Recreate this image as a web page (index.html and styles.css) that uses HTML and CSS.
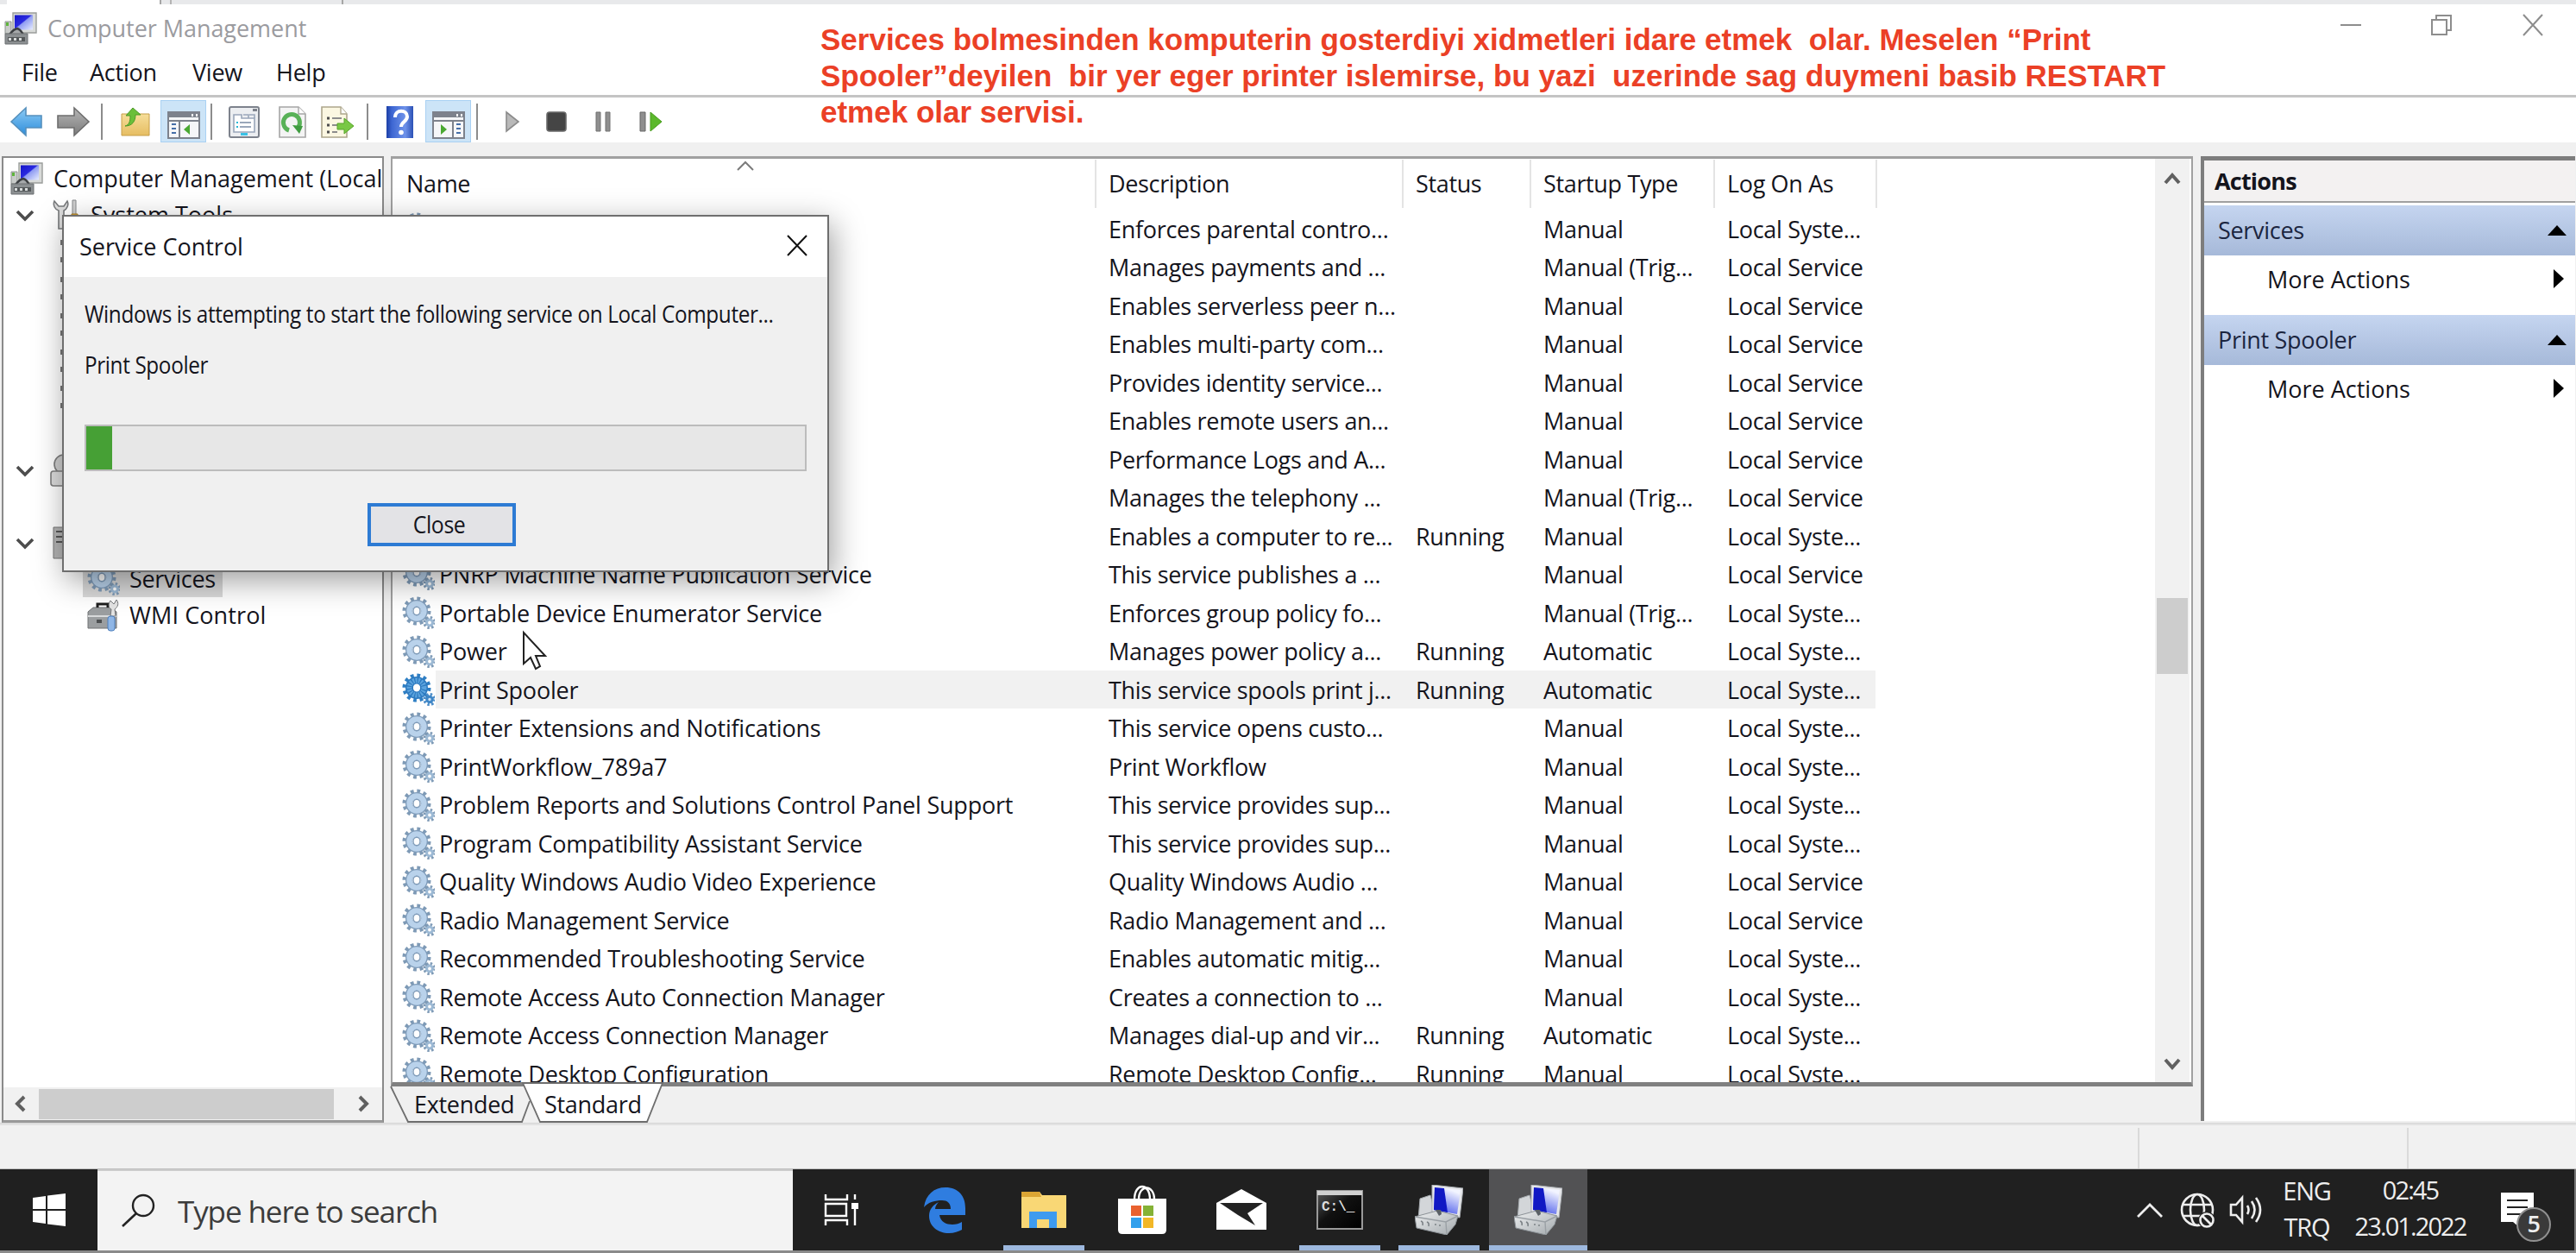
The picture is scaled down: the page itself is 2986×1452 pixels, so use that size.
FILE: index.html
```html
<!DOCTYPE html>
<html lang="en">
<head>
<meta charset="utf-8">
<title>Computer Management</title>
<link rel="stylesheet" href="styles.css">
</head>
<body>
<svg class="defs" width="0" height="0">
  <defs>
    <linearGradient id="gBlue" x1="0" y1="0" x2="1" y2="1"><stop offset="0" stop-color="#1414c8"/><stop offset=".45" stop-color="#2a2ae0"/><stop offset=".5" stop-color="#8f9cf2"/><stop offset="1" stop-color="#e6ecff"/></linearGradient>
    <linearGradient id="gScreen" x1="0" y1="1" x2=".4" y2="0"><stop offset="0" stop-color="#3a4be8"/><stop offset="1" stop-color="#f2f4ff"/></linearGradient>
    <linearGradient id="gArrow" x1="0" y1="0" x2="0" y2="1"><stop offset="0" stop-color="#8ccbf5"/><stop offset="1" stop-color="#2d8ddb"/></linearGradient>
    <linearGradient id="gGray" x1="0" y1="0" x2="0" y2="1"><stop offset="0" stop-color="#b5b5b5"/><stop offset="1" stop-color="#7c7c7c"/></linearGradient>
    <linearGradient id="gFolder" x1="0" y1="0" x2="0" y2="1"><stop offset="0" stop-color="#f8e2a0"/><stop offset="1" stop-color="#e6bd62"/></linearGradient>
    <linearGradient id="gHelp" x1="0" y1="0" x2="1" y2="0"><stop offset="0" stop-color="#1c3fa6"/><stop offset=".2" stop-color="#3d66d2"/><stop offset=".7" stop-color="#6f93ea"/><stop offset="1" stop-color="#2b50b5"/></linearGradient>
    <linearGradient id="gTower" x1="0" y1="0" x2="1" y2="1"><stop offset="0" stop-color="#eef0f1"/><stop offset="1" stop-color="#a3a9ad"/></linearGradient>
    <linearGradient id="gCmd" x1="0" y1="0" x2="1" y2="1"><stop offset="0" stop-color="#5a5a5a"/><stop offset=".45" stop-color="#111"/><stop offset="1" stop-color="#000"/></linearGradient>
  </defs>
  <symbol id="gear" viewBox="0 0 38 38">
    <circle cx="17" cy="17" r="14" fill="none" stroke="#7e9ab6" stroke-width="5" stroke-dasharray="3.66 3.66"/>
    <circle cx="17" cy="17" r="9" fill="none" stroke="#7f9cba" stroke-width="8"/>
    <circle cx="17" cy="17" r="8.500" fill="none" stroke="#b9d2eb" stroke-width="6.400"/>
    <ellipse cx="17" cy="17" rx="4" ry="4.800" fill="#fff" stroke="#7f9cba" stroke-width="1.4"/>
    <circle cx="32" cy="30.500" r="5.600" fill="none" stroke="#7e9ab6" stroke-width="4" stroke-dasharray="2.2 2.2"/>
    <circle cx="32" cy="30.500" r="3.400" fill="#fff" stroke="#9cb9d4" stroke-width="3"/>
  </symbol>
  <symbol id="gear-on" viewBox="0 0 38 38">
    <circle cx="17" cy="17" r="14" fill="none" stroke="#2f7fc4" stroke-width="5" stroke-dasharray="3.66 3.66"/>
    <circle cx="17" cy="17" r="8.500" fill="none" stroke="#2c79bf" stroke-width="9"/>
    <circle cx="17" cy="17" r="8.500" fill="none" stroke="#5ba3de" stroke-width="6" stroke-dasharray="2 1.2"/>
    <ellipse cx="17" cy="17" rx="3.800" ry="4.600" fill="#fff"/>
    <circle cx="32" cy="30.500" r="5.600" fill="none" stroke="#4a8cc8" stroke-width="4" stroke-dasharray="2.2 2.2"/>
    <circle cx="32" cy="30.500" r="3.200" fill="#cfe3f5" stroke="#3f86c6" stroke-width="3"/>
  </symbol>
  <symbol id="mgmt" viewBox="0 0 38 38">
    <path d="M1 11h7v14H1z" fill="#c9ccca" stroke="#8d918f"/>
    <path d="M2 12h3v4H2z" fill="#5fb53c"/>
    <path d="M10 1h27v23H10z" fill="#d8dad8" stroke="#9a9d9b" stroke-width="1.4"/>
    <path d="M12 3.5h21v17H12z" fill="url(#gBlue)"/>
    <path d="M6 26c2-2 4-6 9-7 4 1 5 4 7 7" fill="#a5a8aa" stroke="#3c3f42" stroke-width="2.4"/>
    <path d="M1 25h26v12H1z" fill="#8c9092" stroke="#6c7072"/>
    <path d="M4 29h20v5H4z" fill="#54585a"/>
    <path d="M5 30h3v3H5zM11 30h3v3h-3zM17 30h3v3h-3z" fill="#d9dcdc"/>
  </symbol>
  <symbol id="mmc" viewBox="0 0 56 58">
    <path d="M6 16l12-4 6 22-20 6z" fill="#d3d6d9" stroke="#a4a9ad"/>
    <path d="M20 0l36 4-4 34-32-6z" fill="#e6e7ea" stroke="#a9adb2"/>
    <path d="M23 3l30 3-4 28-27-5z" fill="url(#gScreen)"/>
    <path d="M23 3l11 1 4 28-16-3z" fill="#1018c4"/>
    <path d="M0 37l26-7 24 6-3 10-10 12L2 50z" fill="url(#gTower)" stroke="#8b9196"/>
    <path d="M0 37l36 6 14-7M36 43l1 15" fill="none" stroke="#9aa0a5" stroke-width="1.4"/>
    <path d="M7 42q3 1 2 5M14 43q3 1 2 5M23 46h2M28 47h2" fill="none" stroke="#7c8286" stroke-width="1.6"/>
    <path d="M24 29l4 7 3-2-1-5z" fill="#5a6066"/>
  </symbol>
  <symbol id="chev" viewBox="0 0 22 14"><path d="M2 2l9 9 9-9" fill="none" stroke="#4d4d4d" stroke-width="3.6"/></symbol>
</svg>

<div class="strip"><i class="tab-on"></i><i class="tab-gap"></i><i class="tab-off"></i></div>

<header class="titlebar">
  <svg class="ic38"><use href="#mgmt"/></svg>
  <span class="title">Computer Management</span>
  <div class="winbtns">
    <svg width="24" height="24"><path d="M0 12h24" stroke="#8d8d8d" stroke-width="2"/></svg>
    <svg width="24" height="24"><path d="M1 6h17v17H1zM6 6V1h17v17h-5" fill="none" stroke="#8d8d8d" stroke-width="2"/></svg>
    <svg width="24" height="24"><path d="M1 0l22 24M23 0L1 24" stroke="#8d8d8d" stroke-width="2"/></svg>
  </div>
</header>

<nav class="menubar"><span>File</span><span>Action</span><span>View</span><span>Help</span></nav>

<div class="toolbar">
  <svg width="37" height="34"><path d="M1 17L18 1v9h18v14H18v9z" fill="url(#gArrow)" stroke="#5590bd" stroke-width="1.6"/></svg>
  <svg width="38" height="34"><path d="M37 17L20 1v9H1v14h19v9z" fill="url(#gGray)" stroke="#6d6d6d" stroke-width="1.6"/></svg>
  <i class="sep"></i>
  <svg width="34" height="34"><path d="M1 8h8l3-3h6v3h15v25H1z" fill="url(#gFolder)" stroke="#c79e48"/><path d="M5 22c5-1 6-6 6-12H6l8-9 9 8h-6c0 8-4 13-12 13z" fill="#6abf3a" stroke="#4c9a26"/></svg>
  <span class="hot"><svg width="38" height="32"><path d="M1 1h36v30H1z" fill="#f5f6f8" stroke="#7d828c" stroke-width="2"/><path d="M1 2h36v5H1z" fill="#7d828c"/><path d="M28 3h2v3h-2zM33 3h2v3h-2z" fill="#fff"/><path d="M1 11h36M14 11v20" stroke="#7d828c" stroke-width="2"/><path d="M5 15h5M5 20h5M5 25h5" stroke="#456ea8" stroke-width="2"/><path d="M26 15v12l-7-6z" fill="#4aa832"/></svg></span>
  <i class="sep"></i>
  <svg width="36" height="37"><rect x="1" y="1" width="34" height="35" rx="2" fill="#eceef1" stroke="#7d828c" stroke-width="2"/><path d="M28 3h5v3h-5z" fill="#7d828c"/><path d="M6 10h9v4h15v16H6z" fill="#fff" stroke="#9aa7ba" stroke-width="1.6"/><path d="M17 10h6v4M24 10h6v4" fill="none" stroke="#9aa7ba" stroke-width="1.6"/><path d="M13 19h13M13 24h13" stroke="#9aa7ba" stroke-width="2"/><path d="M9 19h2M9 24h2" stroke="#26b7d6" stroke-width="2"/><path d="M14 31h8v3h-8z" fill="#3ac2e6"/></svg>
  <svg width="32" height="37"><path d="M1 1h22l8 8v27H1z" fill="#f4f4f4" stroke="#a5a5a5" stroke-width="1.6"/><path d="M23 1v8h8" fill="#fff" stroke="#a5a5a5" stroke-width="1.4"/><path d="M12 28a9.500 9.500 0 1 1 11-4" fill="none" stroke="#58b157" stroke-width="5"/><path d="M16 22l12 1-4 9z" fill="#3f9c40"/></svg>
  <svg width="39" height="37"><path d="M1 1h22l7 8v27H1z" fill="#fbf7e2" stroke="#ada68c" stroke-width="1.6"/><path d="M23 1v8h7" fill="#fff" stroke="#ada68c" stroke-width="1.4"/><path d="M7 14h3M7 22h3M7 30h3" stroke="#4d4d4d" stroke-width="3"/><path d="M13 14h11M13 22h6M13 30h6" stroke="#8d8d8d" stroke-width="2"/><path d="M19 20h8v-6l11 9-11 9v-5h-8z" fill="#79c845" stroke="#58a52c"/></svg>
  <i class="sep"></i>
  <svg width="31" height="37"><path d="M0 0h31v37H0z" fill="url(#gHelp)"/><path d="M10 13c0-10 14-9 14-1 0 6-7 6-7 12" fill="none" stroke="#fff" stroke-width="4"/><circle cx="17" cy="30.500" r="2.800" fill="#fff"/></svg>
  <span class="hot"><svg width="38" height="32"><path d="M1 1h36v30H1z" fill="#f5f6f8" stroke="#7d828c" stroke-width="2"/><path d="M1 2h36v5H1z" fill="#7d828c"/><path d="M28 3h2v3h-2zM33 3h2v3h-2z" fill="#fff"/><path d="M1 11h36M24 11v20" stroke="#7d828c" stroke-width="2"/><path d="M28 15h5M28 20h5M28 25h5" stroke="#456ea8" stroke-width="2"/><path d="M10 15v12l7-6z" fill="#4aa832"/></svg></span>
  <i class="sep"></i>
  <svg width="16" height="24"><path d="M1 1l14 11L1 23z" fill="#b9b9b9" stroke="#8b8b8b" stroke-width="1.600"/></svg>
  <svg width="24" height="24"><rect x="1" y="1" width="22" height="22" rx="3" fill="#454545" stroke="#6a6a6a" stroke-width="1.600"/></svg>
  <svg width="18" height="24"><path d="M1 1h5v22H1zM12 1h5v22h-5z" fill="#8f8f8f" stroke="#707070"/></svg>
  <svg width="27" height="24"><path d="M1 1h6v22H1z" fill="#8f8f8f" stroke="#666"/><path d="M13 1l13 11-13 11z" fill="#5cb82c" stroke="#479a1d"/></svg>
</div>

<main class="main">
  <section class="tree">
    <div class="tree-rows">
      <div class="tr root"><svg class="ic38"><use href="#mgmt"/></svg><span>Computer Management (Local</span></div>
      <div class="tr lvl1"><svg class="chev"><use href="#chev"/></svg><svg width="34" height="38"><path d="M3 3c-2 5 1 10 5 11v21h6V14c4-2 6-7 4-11l-4 6H8z" fill="#dcdcdc" stroke="#77797b" stroke-width="1.600"/><path d="M24 2h4v18h-4z" fill="#cfcfcf" stroke="#86888a"/><path d="M23 18h7v18h-7z" fill="#e0ab3a" stroke="#a77a20"/></svg><span>System Tools</span></div>
      <div class="tr frag"><i></i></div><div class="tr frag"><i></i></div><div class="tr frag"><i></i></div>
      <div class="tr frag"><i></i></div><div class="tr frag"><i></i></div><div class="tr"></div>
      <div class="tr lvl1"><svg class="chev"><use href="#chev"/></svg><svg width="34" height="38"><circle cx="14" cy="12" r="11" fill="#cfcfcf" stroke="#7d7d7d" stroke-width="1.600"/><rect x="-1" y="20" width="32" height="17" rx="3" fill="#dcdcdc" stroke="#7d7d7d" stroke-width="1.600"/></svg></div>
      <div class="tr"></div>
      <div class="tr lvl1"><svg class="chev"><use href="#chev"/></svg><svg width="34" height="38"><path d="M2 1h30v36H2z" fill="#b4b4b4" stroke="#777"/><path d="M5 6h24M5 12h24M5 18h24" stroke="#555" stroke-width="2"/></svg></div>
      <div class="tr lvl2"><span class="picked"><svg class="ic38"><use href="#gear"/></svg>Services</span></div>
      <div class="tr lvl2"><span class="leaf"><svg width="38" height="38"><path d="M1 15l6-5h21l6 5v19H1z" fill="#9b9ea0" stroke="#707375"/><path d="M1 20h33" stroke="#d8dadb" stroke-width="2"/><path d="M12 10V6h12v4" fill="none" stroke="#1e1e1e" stroke-width="3"/><path d="M27 2c-3 4-2 9 1 10l-1 8h6l-1-8c4-3 5-7 2-11l-3 5z" fill="#e4e4e4" stroke="#77797b"/><rect x="24" y="20" width="8" height="17" rx="3" fill="#8fb6e6" stroke="#4d7fbd"/><path d="M11 24h6v4h-6z" fill="#4c4f51"/></svg>WMI Control</span></div>
    </div>
    <div class="hscroll">
      <svg width="14" height="20"><path d="M11 2l-8 8 8 8" fill="none" stroke="#606060" stroke-width="4"/></svg>
      <i class="hthumb"></i>
      <svg width="14" height="20"><path d="M3 2l8 8-8 8" fill="none" stroke="#606060" stroke-width="4"/></svg>
    </div>
  </section>

  <section class="center">
    <div class="list">
      <div class="grid">
        <div class="row head"><b></b><span>Name<svg class="sort" width="20" height="12"><path d="M1 11l9-9 9 9" fill="none" stroke="#7b7b7b" stroke-width="2"/></svg></span><span>Description</span><span>Status</span><span>Startup Type</span><span>Log On As</span></div>
        <div class="row"><svg><use href="#gear"/></svg><span></span><span>Enforces parental contro...</span><span></span><span>Manual</span><span>Local Syste...</span></div>
        <div class="row"><b></b><span></span><span>Manages payments and ...</span><span></span><span>Manual (Trig...</span><span>Local Service</span></div>
        <div class="row"><b></b><span></span><span>Enables serverless peer n...</span><span></span><span>Manual</span><span>Local Service</span></div>
        <div class="row"><b></b><span></span><span>Enables multi-party com...</span><span></span><span>Manual</span><span>Local Service</span></div>
        <div class="row"><b></b><span></span><span>Provides identity service...</span><span></span><span>Manual</span><span>Local Service</span></div>
        <div class="row"><b></b><span></span><span>Enables remote users an...</span><span></span><span>Manual</span><span>Local Service</span></div>
        <div class="row"><b></b><span></span><span>Performance Logs and A...</span><span></span><span>Manual</span><span>Local Service</span></div>
        <div class="row"><b></b><span></span><span>Manages the telephony ...</span><span></span><span>Manual (Trig...</span><span>Local Service</span></div>
        <div class="row"><b></b><span></span><span>Enables a computer to re...</span><span>Running</span><span>Manual</span><span>Local Syste...</span></div>
        <div class="row"><svg><use href="#gear"/></svg><span>PNRP Machine Name Publication Service</span><span>This service publishes a ...</span><span></span><span>Manual</span><span>Local Service</span></div>
        <div class="row"><svg><use href="#gear"/></svg><span>Portable Device Enumerator Service</span><span>Enforces group policy fo...</span><span></span><span>Manual (Trig...</span><span>Local Syste...</span></div>
        <div class="row"><svg><use href="#gear"/></svg><span>Power</span><span>Manages power policy a...</span><span>Running</span><span>Automatic</span><span>Local Syste...</span></div>
        <div class="row sel"><svg><use href="#gear-on"/></svg><span>Print Spooler</span><span>This service spools print j...</span><span>Running</span><span>Automatic</span><span>Local Syste...</span></div>
        <div class="row"><svg><use href="#gear"/></svg><span>Printer Extensions and Notifications</span><span>This service opens custo...</span><span></span><span>Manual</span><span>Local Syste...</span></div>
        <div class="row"><svg><use href="#gear"/></svg><span>PrintWorkflow_789a7</span><span>Print Workflow</span><span></span><span>Manual</span><span>Local Syste...</span></div>
        <div class="row"><svg><use href="#gear"/></svg><span>Problem Reports and Solutions Control Panel Support</span><span>This service provides sup...</span><span></span><span>Manual</span><span>Local Syste...</span></div>
        <div class="row"><svg><use href="#gear"/></svg><span>Program Compatibility Assistant Service</span><span>This service provides sup...</span><span></span><span>Manual</span><span>Local Syste...</span></div>
        <div class="row"><svg><use href="#gear"/></svg><span>Quality Windows Audio Video Experience</span><span>Quality Windows Audio ...</span><span></span><span>Manual</span><span>Local Service</span></div>
        <div class="row"><svg><use href="#gear"/></svg><span>Radio Management Service</span><span>Radio Management and ...</span><span></span><span>Manual</span><span>Local Service</span></div>
        <div class="row"><svg><use href="#gear"/></svg><span>Recommended Troubleshooting Service</span><span>Enables automatic mitig...</span><span></span><span>Manual</span><span>Local Syste...</span></div>
        <div class="row"><svg><use href="#gear"/></svg><span>Remote Access Auto Connection Manager</span><span>Creates a connection to ...</span><span></span><span>Manual</span><span>Local Syste...</span></div>
        <div class="row"><svg><use href="#gear"/></svg><span>Remote Access Connection Manager</span><span>Manages dial-up and vir...</span><span>Running</span><span>Automatic</span><span>Local Syste...</span></div>
        <div class="row"><svg><use href="#gear"/></svg><span>Remote Desktop Configuration</span><span>Remote Desktop Config...</span><span>Running</span><span>Manual</span><span>Local Syste...</span></div>
      </div>
      <div class="vscroll">
        <svg width="20" height="16"><path d="M2 13l8-9 8 9" fill="none" stroke="#606060" stroke-width="4"/></svg>
        <i class="vthumb"></i>
        <svg width="20" height="16"><path d="M2 3l8 9 8-9" fill="none" stroke="#606060" stroke-width="4"/></svg>
      </div>
    </div>
    <div class="tabs">
      <svg class="tabshape" width="330" height="44"><path d="M0 0l20 41h132l9-24-7-17z" fill="#f0f0f0"/><path d="M0 0l20 41h132l9-24" fill="none" stroke="#6e6e6e" stroke-width="1.800"/><path d="M153 -4l20 45h124l18-45z" fill="#fff" stroke="#6e6e6e" stroke-width="1.800"/></svg>
      <span>Extended</span><span>Standard</span>
    </div>
  </section>

  <aside class="actions">
    <h2>Actions</h2>
    <div class="group">Services<svg width="22" height="12"><path d="M0 12L11 0l11 12z"/></svg></div>
    <div class="more">More Actions<svg width="12" height="22"><path d="M0 0l12 11L0 22z"/></svg></div>
    <div class="group second">Print Spooler<svg width="22" height="12"><path d="M0 12L11 0l11 12z"/></svg></div>
    <div class="more">More Actions<svg width="12" height="22"><path d="M0 0l12 11L0 22z"/></svg></div>
  </aside>
</main>

<footer class="status"><i></i><i></i><i></i></footer>

<div class="taskbar">
  <div class="start"><svg width="38" height="38"><path d="M0 5l15-2v15H0zM17 2.500L38 0v18H17zM0 20h15v15L0 33zM17 20h21v18l-21-2.500z" fill="#fff"/></svg></div>
  <div class="search"><svg width="40" height="40"><circle cx="26" cy="14" r="12" fill="none" stroke="#222" stroke-width="2.400"/><path d="M18 23L2 38" stroke="#222" stroke-width="2.600"/></svg><span>Type here to search</span></div>
  <div class="apps">
    <div><svg width="40" height="38"><path d="M2 1v6h25V1M2 37v-6h25v6" fill="none" stroke="#fff" stroke-width="2.400"/><path d="M2 12h24v14H2z" fill="none" stroke="#fff" stroke-width="2.400"/><path d="M36 1v36" stroke="#fff" stroke-width="2.400" stroke-dasharray="6 4 30"/><path d="M32 11h8v7h-8z" fill="#fff"/></svg></div>
    <div><svg width="50" height="54"><path d="M1 24C3 9 13 1 26 1c15 0 23 10 23 24v8H19c1 8 8 11 15 11 4 0 8-1 11-3v9c-4 2-9 4-15 4-13 0-23-8-23-20 0-8 5-13 11-16-2 2-4 5-4 8h18c0-7-4-10-10-10C14 16 6 18 1 24z" fill="#2f7de0"/></svg></div>
    <div class="run"><svg width="52" height="44"><path d="M0 1h21l3 4h28v38H0z" fill="#f9d775"/><path d="M0 1h21l2 6H0z" fill="#dba534"/><path d="M9 43V24h32v19h-9V33H18v10z" fill="#3e9bef"/></svg></div>
    <div><svg width="56" height="58"><path d="M19 17c0-20 18-20 18 0M24 17c0-18 18-18 18 0" fill="none" stroke="#fff" stroke-width="2.400"/><path d="M0 16h56v36q0 5-5 5H5q-5 0-5-5z" fill="#fff"/><path d="M15 24h12v12H15z" fill="#e9622f"/><path d="M29 24h12v12H29z" fill="#85b236"/><path d="M15 38h12v12H15z" fill="#33a0ec"/><path d="M29 38h12v12H29z" fill="#f2b727"/></svg></div>
    <div><svg width="58" height="48"><path d="M0 16L29 0l29 16v31H0z" fill="#fff"/><path d="M4 16h50L36 28l9 14-20-12z" fill="#222"/></svg></div>
    <div class="run"><svg width="54" height="46"><path d="M1 1h52v44H1z" fill="url(#gCmd)" stroke="#9a9a9a" stroke-width="2"/><path d="M1 1h52v5H1z" fill="#d0d0d0"/><text x="6" y="24" class="cmdtxt">C:\_</text></svg></div>
    <div class="run"><svg width="56" height="58"><use href="#mmc"/></svg></div>
    <div class="run active"><svg width="56" height="58"><use href="#mmc"/></svg></div>
  </div>
  <div class="tray">
    <svg width="30" height="18"><path d="M1 17L15 3l14 14" fill="none" stroke="#eee" stroke-width="2.800"/></svg>
    <svg width="40" height="42"><g fill="none" stroke="#eee" stroke-width="2.600"><circle cx="19" cy="21" r="18"/><ellipse cx="19" cy="21" rx="8" ry="18"/><path d="M2 15h34M2 28h34"/></g><circle cx="30" cy="33" r="10" fill="#202020"/><circle cx="30" cy="33" r="7.500" fill="none" stroke="#eee" stroke-width="2.600"/><path d="M25 28l10 10" stroke="#eee" stroke-width="2.600"/></svg>
    <svg width="40" height="36"><g fill="none" stroke="#eee" stroke-width="2.600"><path d="M1 12h6l7-8v28l-7-8H1z"/><path d="M20 13q3 5 0 10M25 8q7 10 0 20M30 4q10 14 0 28"/></g></svg>
    <div class="two lang"><span>ENG</span><span>TRQ</span></div>
    <div class="two clock"><span>02:45</span><span>23.01.2022</span></div>
    <div class="note"><svg width="38" height="40"><path d="M0 0h38v34H24l-3 6-7-6H0z" fill="#fff"/><path d="M7 9h24M7 17h24M7 25h16" stroke="#222" stroke-width="2.200"/></svg><span class="badge">5</span></div>
  </div>
</div>
<div class="bottom"></div>

<p class="annot">Services bolmesinden komputerin gosterdiyi xidmetleri idare etmek&nbsp; olar. Meselen “Print<br>Spooler”deyilen&nbsp; bir yer eger printer islemirse, bu yazi&nbsp; uzerinde sag duymeni basib RESTART<br>etmek olar servisi.</p>

<div class="dialog">
  <div class="dtitle"><span>Service Control</span><svg width="24" height="25"><path d="M1 1l22 23M23 1L1 24" stroke="#111" stroke-width="2"/></svg></div>
  <div class="dbody">
    <p><span class="narrow">Windows is attempting to start the following service on Local Computer...</span></p>
    <p class="svc"><span class="narrow">Print Spooler</span></p>
    <div class="progress"><i></i></div>
    <button class="close"><span>Close</span></button>
  </div>
</div>

<svg class="cursor" width="30" height="46"><path d="M2 2v36l8-7 6 13 5-3-5-12h11z" fill="#fff" stroke="#222" stroke-width="2"/></svg>
</body>
</html>
```
FILE: styles.css
```css
* { box-sizing: border-box; margin: 0; padding: 0; }
body {
  width: 2986px; height: 1452px; overflow: hidden; position: relative;
  display: flex; flex-direction: column;
  background: #fff; color: #14141c;
  font: 27px/38px "Open Sans", "Noto Sans", sans-serif;
  letter-spacing: -0.3px; white-space: nowrap;
}
i, b { display: block; }
svg { display: block; flex: none; overflow: visible; }
.defs { position: absolute; }
.ic38 { width: 38px; height: 38px; }

.strip { height: 5px; background: #e8e9eb; display: flex; flex: none; padding-left: 8px; }
.tab-on { width: 179px; background: #fff; border-right: 2px solid #a6a6a6; }
.tab-gap { width: 12px; border-right: 2px solid #b4b4b4; }
.tab-off { width: 199px; border-right: 2px solid #a6a6a6; }

.titlebar { height: 55px; flex: none; display: flex; align-items: center; padding: 0 38px 0 5px; }
.title { margin-left: 12px; color: #9b9b9f; flex: 1; letter-spacing: -0.05px; }
.winbtns { display: flex; gap: 82px; padding-bottom: 7px; }
.winbtns svg:first-child { margin-right: -1px; }

.menubar { height: 53px; flex: none; display: flex; padding: 5px 0 0 25px; border-bottom: 3px solid #c4c4c4; letter-spacing: -0.25px; }
.menubar span:nth-child(1) { width: 79px; }
.menubar span:nth-child(2) { width: 119px; }
.menubar span:nth-child(3) { width: 97px; }

.toolbar { height: 68px; flex: none; display: flex; align-items: flex-start; border-bottom: 16px solid #f0f0f0; }
.toolbar > * { align-self: center; margin-top: 4px; }
.toolbar > :nth-child(1) { margin-left: 12px; }
.toolbar > :nth-child(2) { margin-left: 17px; }
.toolbar > :nth-child(3) { margin-left: 13px; }
.toolbar > :nth-child(4) { margin-left: 20px; }
.toolbar > :nth-child(5) { margin-left: 12px; }
.toolbar > :nth-child(6) { margin-left: 5px; }
.toolbar > :nth-child(7) { margin-left: 18px; }
.toolbar > :nth-child(8) { margin-left: 22px; }
.toolbar > :nth-child(9) { margin-left: 17px; }
.toolbar > :nth-child(10) { margin-left: 14px; }
.toolbar > :nth-child(11) { margin-left: 20px; }
.toolbar > :nth-child(12) { margin-left: 14px; }
.toolbar > :nth-child(13) { margin-left: 6px; }
.toolbar > :nth-child(14) { margin-left: 31px; }
.toolbar > :nth-child(15) { margin-left: 31px; }
.toolbar > :nth-child(16) { margin-left: 33px; }
.toolbar > :nth-child(17) { margin-left: 33px; }
.toolbar > .hot { margin-top: 2px; }
.sep { width: 2px; height: 42px; background: #8c8c8c; margin-right: 1px; }
.hot { width: 53px; height: 49px; background: #cce4f7; border: 1px solid #a9d1f3; display: flex; justify-content: center; align-items: center; padding-top: 9px; }

.main { height: 1121px; flex: none; display: grid; grid-template-columns: 443px 2089px 435px; column-gap: 8px; padding-left: 2px; background: #f0f0f0; border-bottom: 1px solid #d6d6d6; }
.tree { height: 1120px; background: #fff; border: 2px solid #8a8a8a; border-bottom-width: 3px; border-bottom-color: #999; display: flex; flex-direction: column; justify-content: space-between; overflow: hidden; letter-spacing: 0; }
.tree-rows { padding-top: 3px; }
.tr { height: 42.2px; display: flex; align-items: center; }
.root { padding-left: 8px; }
.root span { margin-left: 12px; }
.lvl1 { padding-left: 14px; gap: 17px; }
.lvl1 span { margin-left: -6px; }
.chev { width: 22px; height: 14px; margin-top: 2px; }
.lvl1 .chev + svg { margin-left: 3px; }
.frag { padding-left: 66px; }
.frag i { width: 4px; height: 26px; border: solid #777; border-width: 6px 0; }
.lvl2 { padding-left: 92px; }
.picked { background: #d9d9d9; height: 42px; width: 162px; display: flex; align-items: center; gap: 11px; padding-left: 5px; letter-spacing: -0.3px; }
.leaf { display: flex; align-items: center; gap: 11px; padding-left: 5px; letter-spacing: 0.1px; }
.hscroll { height: 38px; background: #f1f1f1; display: flex; align-items: center; padding: 0 10px 0 13px; gap: 14px; }
.hthumb { width: 342px; height: 35px; background: #cdcdcd; }
.hscroll svg:last-child { margin-left: 13px; }

.center { display: flex; flex-direction: column; }
.list { height: 1078px; border: 3px solid #a0a0a0; border-width: 3px 2px 5px; border-bottom-color: #808080; background: #fff; display: flex; justify-content: space-between; overflow: hidden; }
.grid { padding-top: 1px; }
.row { height: 44.53px; display: grid; grid-template-columns: 50px 764px 356px 148px 213px 188px; align-items: center; }
.row > svg { width: 38px; height: 38px; margin-left: 11px; }
.row > span { padding-left: 16px; height: 44.53px; line-height: 45.5px; }
.row > span:nth-child(2) { padding-left: 4px; letter-spacing: -0.22px; }
.row.head { height: 57.6px; align-items: start; }
.row.head > span { height: 56px; line-height: 56px; border-right: 2px solid #e4e4e4; position: relative; margin-right: -2px; letter-spacing: -0.35px; }
.row.head > span:nth-child(2) { padding-left: 16px; margin-left: -50px; }
.sort { position: absolute; left: 399px; top: 1px; }
.row.sel > span { background: #f1f1f1; }
.vscroll { width: 40px; margin-right: 2px; background: #f1f1f1; display: flex; flex-direction: column; align-items: center; padding: 15px 0 13px; }
.vthumb { width: 36px; height: 88px; background: #cdcdcd; margin: 478px 0 auto; }

.tabs { flex: 1; position: relative; display: flex; padding: 1px 0 0 27px; }
.tabshape { position: absolute; left: 0; top: 0; }
.tabs span { position: relative; width: 151px; margin-top: 1px; }

.actions { margin-left: 1px; height: 1118px; border-left: 4px solid #7d7d7d; border-top: 5px solid #7d7d7d; background: #fff; }
.actions h2 { font-size: 27px; font-weight: 700; line-height: 47px; height: 49px; background: #f3f1f1; border-bottom: 2px solid #a0a0a0; padding-left: 12px; letter-spacing: -0.8px; }
.group { margin-top: 3px; height: 58px; line-height: 56px; padding: 0 10px 0 16px; display: flex; justify-content: space-between; align-items: center; background: linear-gradient(#c5d5f0, #a6b9d9); color: #1b2540; }
.more { height: 58px; line-height: 54px; padding: 0 13px 3px 73px; display: flex; justify-content: space-between; align-items: center; letter-spacing: 0; }
.more svg { margin-top: -2px; }
.group.second { margin-top: 11px; }

.status { height: 53px; flex: none; background: #f1f1f1; border-top: 2px solid #e2e2e2; border-bottom: 1px solid #bdbdbd; display: flex; padding-top: 3px; }
.status i:nth-child(1) { width: 2480px; border-right: 2px solid #dadada; }
.status i:nth-child(2) { width: 312px; border-right: 2px solid #dadada; }

.taskbar { height: 94px; flex: none; background: #202020; display: flex; color: #eee; border-right: 2px solid #777; }
.start { width: 113px; display: flex; align-items: center; justify-content: center; }
.search { width: 806px; background: #f3f3f3; color: #3c3c3c; display: flex; align-items: center; gap: 26px; padding-left: 27px; font-size: 35px; line-height: 48px; border-top: 2px solid #ccc; }
.search span { padding-top: 1px; letter-spacing: -1.1px; }
.apps { display: flex; }
.apps > div { width: 94px; margin-right: 20.6px; height: 94px; display: flex; align-items: center; justify-content: center; }
.apps > div:first-child { margin-left: 9px; margin-right: 26px; }
.apps .run { border-bottom: 6px solid #9db8de; padding-top: 6px; }
.apps > div:nth-child(7) { margin-right: 11px; }
.apps .active { width: 114px; margin-right: 0; background: #525254; }
.cmdtxt { font: bold 16px "Liberation Mono", monospace; fill: #ddd; letter-spacing: 0; }
.tray { margin-left: auto; display: flex; align-items: center; padding-right: 47px; font-size: 29px; }
.tray > svg:nth-child(2) { margin-left: 21px; }
.tray > svg:nth-child(3) { margin-left: 17px; }
.two { display: flex; flex-direction: column; align-items: center; line-height: 42px; letter-spacing: -1.2px; padding-bottom: 4px; }
.lang { width: 54px; margin-left: 22px; padding-bottom: 3px; }
.clock { width: 130px; margin-left: 28px; letter-spacing: -1.9px; }
.note { margin-left: 40px; position: relative; }
.badge { position: absolute; left: 18px; top: 17px; width: 40px; height: 40px; border-radius: 50%; background: #3a3a3a; border: 2px solid #909090; text-align: center; line-height: 34px; font-size: 27px; font-weight: 600; }
.bottom { height: 3px; background: #8a8a8a; }

.annot { position: absolute; left: 951px; top: 25px; font: bold 35px/42px "Liberation Sans", Arial, sans-serif; color: #eb4026; letter-spacing: 0; }

.dialog { position: absolute; left: 72px; top: 249px; width: 889px; height: 414px; background: #f0f0f0; border: 2px solid #6e6e6e; box-shadow: 4px 10px 34px rgba(0,0,0,.38); }
.dtitle { height: 70px; background: #fff; display: flex; justify-content: space-between; align-items: center; padding: 0 23px 0 18px; letter-spacing: 0; }
.dtitle svg { margin-top: -3px; }
.dbody { padding: 24px 24px 0 24px; }
.dbody p { height: 38px; letter-spacing: -0.4px; }
.dbody .svc { margin-top: 21px; }
.narrow { display: inline-block; transform: scaleX(.9); transform-origin: left; }
.progress { margin-top: 50px; height: 54px; background: #e7e7e7; border: 2px solid #bcbcbc; }
.progress i { width: 30px; height: 50px; background: #46a035; }
.close { display: block; margin: 37px 0 0 328px; width: 172px; height: 50px; background: #e3e3e6; border: 4px solid #2d7bd4; font: inherit; color: inherit; letter-spacing: -0.4px; }
.close span { display: inline-block; transform: scaleX(.92); margin: 0 0 0 -6px; }
.cursor { position: absolute; left: 605px; top: 731px; }
```
